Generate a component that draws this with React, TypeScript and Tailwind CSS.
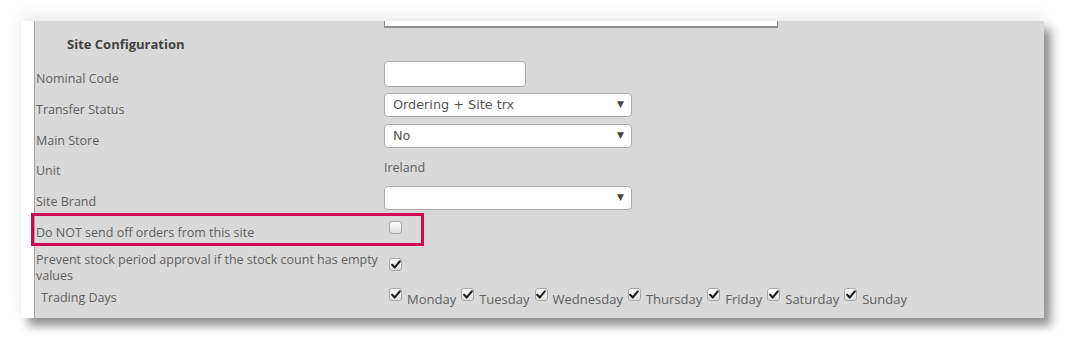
import type { ReactNode } from "react";

const days = ["Monday", "Tuesday", "Wednesday", "Thursday", "Friday", "Saturday", "Sunday"];

function Check({ checked }: { checked: boolean }) {
  return (
    <span className="inline-flex h-[13px] w-[13px] shrink-0 items-center justify-center rounded-[3px] border border-[#a6a6a6] bg-gradient-to-b from-[#fdfdfd] to-[#dedede] shadow-[inset_0_1px_0_#fff]">
      {checked && (
        <svg width="10" height="9" viewBox="0 0 10 9">
          <path d="M1.2 4.8 L3.8 7.4 L8.8 1.4" fill="none" stroke="#1a1a1a" strokeWidth="2.1" strokeLinecap="round" strokeLinejoin="round" />
        </svg>
      )}
    </span>
  );
}

function Select({ value }: { value: string }) {
  return (
    <div className="flex h-[24px] w-[248px] items-center justify-between rounded-[4px] border border-[#a9a9a9] bg-white pl-[8px] pr-[7px] font-['DejaVu_Sans',sans-serif] text-[12.8px] text-[#555]">
      <span>{value}</span>
      <span className="text-[9px] text-[#444]">▼</span>
    </div>
  );
}

function Row({ label, height, labelTop, children }: { label: ReactNode; height: number; labelTop: number; children?: ReactNode }) {
  return (
    <div className="flex" style={{ height }}>
      <div className="w-[348px] shrink-0 leading-[18px]" style={{ paddingTop: labelTop }}>
        {label}
      </div>
      <div className="flex-1">{children}</div>
    </div>
  );
}

export default function App() {
  return (
    <div className="h-[360px] w-[1086px] overflow-hidden bg-white pl-[21px] pt-[21px] font-['Open_Sans',sans-serif] text-[12.5px] text-[#606060]">
      <div className="flex h-[297px] w-[1023px] bg-[#d9d9d9] shadow-[7px_8px_9px_rgba(0,0,0,0.42),0_-6px_14px_rgba(0,0,0,0.07)]">
        <div className="w-[13px] bg-white" />
        <div className="w-px bg-[#a3a3a3]" />
        <div className="flex-1 pl-px">
          <div className="ml-[348px] h-[7px] w-[394px] border-x border-b-2 border-[#8f8f8f] bg-white" />

          <div className="ml-[31px] mt-[6px] h-[20px] text-[13px] font-bold leading-[20px] text-[#444]">Site Configuration</div>

          <div className="h-[7px]" />
          <Row label="Nominal Code" height={26} labelTop={9}>
            <div className="h-[26px] w-[142px] rounded-[4px] border border-[#a9a9a9] bg-white" />
          </Row>
          <div className="h-[6px]" />
          <Row label="Transfer Status" height={24} labelTop={8}>
            <Select value="Ordering + Site trx" />
          </Row>
          <div className="h-[7px]" />
          <Row label="Main Store" height={24} labelTop={8}>
            <Select value="No" />
          </Row>
          <div className="h-[7px]" />
          <Row label="Unit" height={31} labelTop={7}>
            <div className="pt-[4px] leading-[18px]">Ireland</div>
          </Row>
          <Row label="Site Brand" height={24} labelTop={7}>
            <Select value="" />
          </Row>

          <div className="relative">
            <div className="pointer-events-none absolute left-[-5px] top-[3px] h-[33px] w-[393px] border-[3px] border-[#d00652]" />
            <Row label="Do NOT send off orders from this site" height={37} labelTop={14}>
              <div className="pl-[5px] pt-[11px]">
                <Check checked={false} />
              </div>
            </Row>
          </div>

          <div className="flex h-[33px]">
            <div className="w-[348px] shrink-0 pr-[2px] pt-[5px] leading-[16px]">
              Prevent stock period approval if the stock count has empty values
            </div>
            <div className="pl-[5px] pt-[9px]">
              <Check checked />
            </div>
          </div>

          <div className="flex h-[28px]">
            <div className="w-[348px] shrink-0 pl-[5px] pt-[10px] leading-[16px]">Trading Days</div>
            <div className="flex items-start pl-[5px] pt-[8px] text-[13px]">
              {days.map((d) => (
                <div key={d} className="mr-[5px] flex items-start">
                  <Check checked />
                  <span className="ml-[5px] mt-[3px] leading-[16px]">{d}</span>
                </div>
              ))}
            </div>
          </div>
        </div>
      </div>
    </div>
  );
}
